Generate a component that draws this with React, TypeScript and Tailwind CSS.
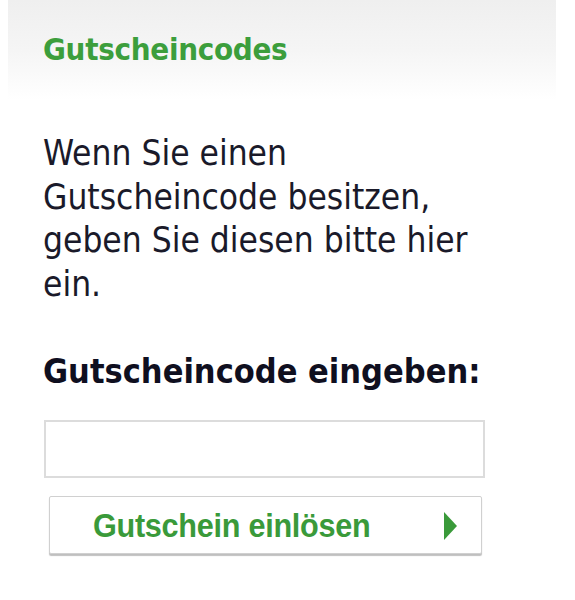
import React from "react";

export default function App() {
  return (
    <div className="w-[575px] h-[600px] bg-white relative overflow-hidden" style={{ fontFamily: '"DejaVu Sans Condensed", "DejaVu Sans", sans-serif' }}>
      <div className="mx-[8px] w-[548px] h-[100px] bg-gradient-to-b from-[#efefef] via-[#f5f5f5] to-white pl-[35px] pt-[31px]">
        <h2 className="text-[31px] leading-[36px] font-bold text-[#3c9e3c] tracking-[-0.3px]">Gutscheincodes</h2>
      </div>
      <div className="pl-[43px] pr-[40px]">
        <p className="mt-[32px] text-[35px] leading-[43.5px] text-[#1a1a2a] w-[460px]">
          Wenn Sie einen Gutscheincode besitzen, geben Sie diesen bitte hier ein.
        </p>
        <p className="mt-[45px] text-[34px] leading-[40px] font-bold text-[#0f0f1f] whitespace-nowrap">Gutscheincode eingeben:</p>
        <input type="text" className="mt-[29px] ml-[1px] block w-[441px] h-[58px] border-2 border-[#dcdcdc] bg-white outline-none" />
        <button className="mt-[18px] ml-[6px] w-[433px] h-[58px] relative flex items-center border border-[#d0d0d0] rounded-[2px] bg-white shadow-[0_2px_1px_rgba(0,0,0,0.25)]" style={{ fontFamily: '"Liberation Sans", Arial, sans-serif' }}>
          <span className="ml-[43px] text-[34px] font-bold text-[#3a9a3a] inline-block origin-left scale-x-[0.9] tracking-[-0.3px] whitespace-nowrap">Gutschein einlösen</span>
          <svg className="absolute left-[394px] top-[15px]" width="13" height="28" viewBox="0 0 13 28"><polygon points="0,0 13,14 0,28" fill="#3a9a3a" /></svg>
        </button>
      </div>
    </div>
  );
}
